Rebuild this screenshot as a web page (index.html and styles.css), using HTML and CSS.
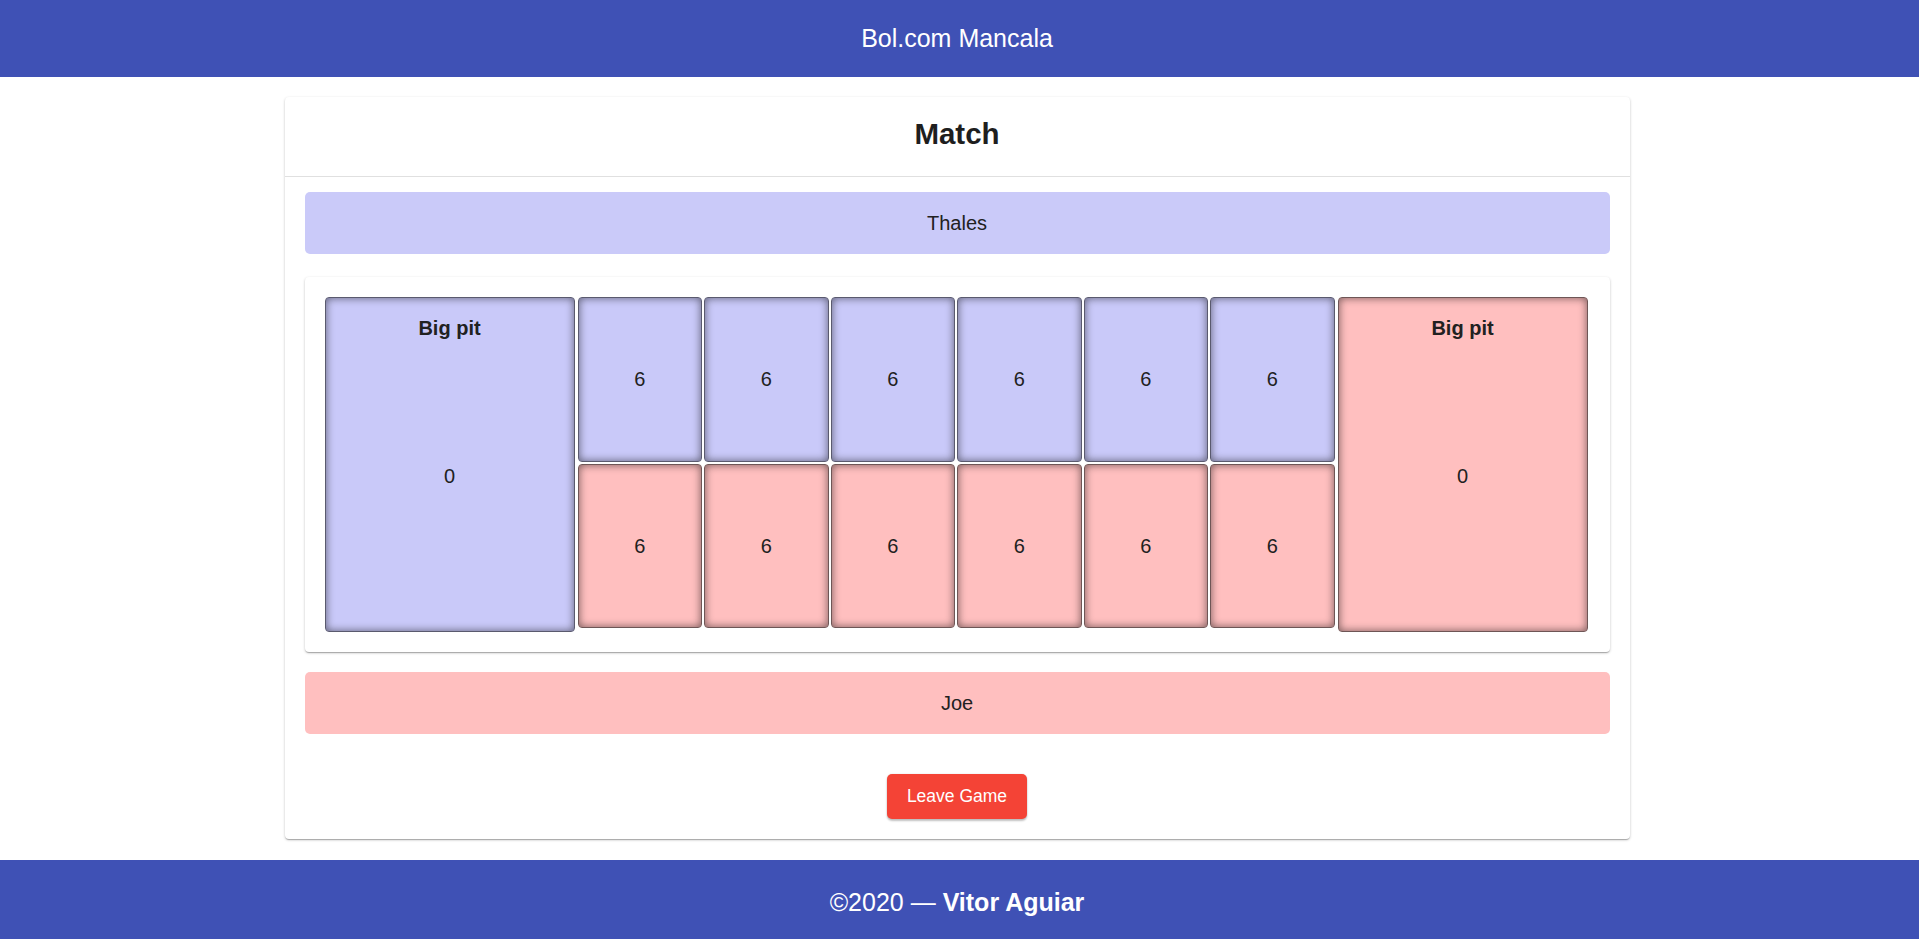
FILE: index.html
```html
<!DOCTYPE html>
<html lang="en">
<head>
<meta charset="utf-8">
<title>Bol.com Mancala</title>
<link rel="stylesheet" href="styles.css">
</head>
<body>
<header class="topbar">Bol.com Mancala</header>
<main class="main">
  <section class="card">
    <div class="card-header"><h1 class="title">Match</h1></div>
    <div class="card-body">
      <div class="player player-blue">Thales</div>
      <div class="board">
        <div class="pits">
          <div class="bigpit pit-blue">
            <div class="bigpit-label">Big pit</div>
            <div class="bigpit-value">0</div>
          </div>
          <div class="small-grid">
            <div class="pit pit-blue">6</div>
            <div class="pit pit-blue">6</div>
            <div class="pit pit-blue">6</div>
            <div class="pit pit-blue">6</div>
            <div class="pit pit-blue">6</div>
            <div class="pit pit-blue">6</div>
            <div class="pit pit-red">6</div>
            <div class="pit pit-red">6</div>
            <div class="pit pit-red">6</div>
            <div class="pit pit-red">6</div>
            <div class="pit pit-red">6</div>
            <div class="pit pit-red">6</div>
          </div>
          <div class="bigpit pit-red">
            <div class="bigpit-label">Big pit</div>
            <div class="bigpit-value">0</div>
          </div>
        </div>
      </div>
      <div class="player player-red">Joe</div>
      <div class="actions"><button class="leave-btn" type="button">Leave Game</button></div>
    </div>
  </section>
</main>
<footer class="footer">©2020 —&nbsp;<strong>Vitor Aguiar</strong></footer>
</body>
</html>
```

FILE: styles.css
```css
html, body {
  margin: 0;
  padding: 0;
  height: 939px;
  overflow: hidden;
}

body {
  font-family: "Liberation Sans", Arial, sans-serif;
  color: #212121;
  background: #ffffff;
}

.topbar {
  height: 77px;
  padding-right: 5px;
  background: #3f51b5;
  color: #ffffff;
  font-size: 25px;
  display: flex;
  align-items: center;
  justify-content: center;
}

.main {
  padding: 20px 5px 21px 0;
}

.card {
  width: 1345px;
  margin: 0 auto;
  background: #ffffff;
  border-radius: 4px;
  box-shadow: 0 1px 3px rgba(0, 0, 0, 0.2), 0 1px 1px rgba(0, 0, 0, 0.14), 0 2px 1px -1px rgba(0, 0, 0, 0.12);
}

.card-header {
  box-sizing: border-box;
  height: 80px;
  padding-bottom: 6px;
  border-bottom: 1px solid #e0e0e0;
  display: flex;
  align-items: center;
  justify-content: center;
}

.title {
  margin: 0;
  font-size: 29.5px;
  font-weight: bold;
  color: #1e1e1e;
}

.card-body {
  padding: 15px 20px 20px;
}

.player {
  height: 62px;
  border-radius: 5px;
  display: flex;
  align-items: center;
  justify-content: center;
  font-size: 20px;
}

.player-blue {
  background: #cacaf9;
}

.player-red {
  background: #ffbfbf;
}

.board {
  margin: 23px 0 20px;
  padding: 20px 22px 20px 20px;
  border-radius: 4px;
  background: #ffffff;
  box-shadow: 0 1px 3px rgba(0, 0, 0, 0.2), 0 1px 1px rgba(0, 0, 0, 0.14), 0 2px 1px -1px rgba(0, 0, 0, 0.12);
}

.pits {
  display: flex;
  align-items: flex-start;
}

.pit-blue {
  background: #c9c9f9;
}

.pit-red {
  background: #ffbfbf;
}

.bigpit {
  width: 250px;
  height: 335px;
  flex: none;
  box-sizing: border-box;
  border: 1px solid #5a5a6e;
  border-radius: 4px;
  box-shadow: inset 0 0 8px rgba(0, 0, 0, 0.55);
  display: flex;
  flex-direction: column;
  align-items: center;
}

.pit-red.bigpit,
.pit-red.pit {
  border-color: #6e5656;
}

.bigpit-label {
  padding-top: 19px;
  font-size: 20px;
  line-height: 22px;
  font-weight: bold;
}

.bigpit-value {
  margin-top: 126px;
  font-size: 20px;
  line-height: 22px;
}

.small-grid {
  flex: 1;
  margin: 0 3px;
  display: grid;
  grid-template-columns: repeat(6, 1fr);
  grid-template-rows: 165px 164px;
  gap: 2px;
}

.pit {
  box-sizing: border-box;
  border: 1px solid #5a5a6e;
  border-radius: 4px;
  box-shadow: inset 0 0 8px rgba(0, 0, 0, 0.55);
  display: flex;
  align-items: center;
  justify-content: center;
  font-size: 20px;
}

.actions {
  display: flex;
  justify-content: center;
  margin-top: 40px;
}

.leave-btn {
  width: 140px;
  height: 45px;
  border: none;
  border-radius: 5px;
  background: #f44336;
  color: #ffffff;
  font-family: "Liberation Sans", Arial, sans-serif;
  font-size: 17.5px;
  box-shadow: 0 2px 2px rgba(0, 0, 0, 0.24), 0 0 2px rgba(0, 0, 0, 0.12);
  cursor: pointer;
}

.footer {
  height: 79px;
  box-sizing: border-box;
  padding: 6px 5px 0 0;
  background: #3f51b5;
  color: #ffffff;
  font-size: 25px;
  display: flex;
  align-items: center;
  justify-content: center;
}

.footer strong {
  font-weight: bold;
}
```
